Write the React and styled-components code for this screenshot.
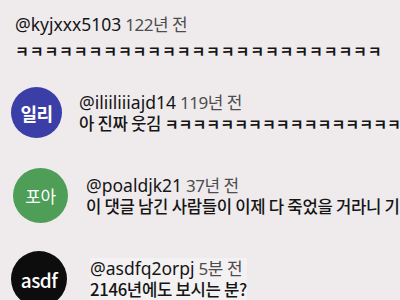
import React from "react";
import styled, { createGlobalStyle } from "styled-components";

const Global = createGlobalStyle`
  html, body { margin: 0; padding: 0; background: #efebed; }
  body { font-family: "Noto Sans", "Noto Sans CJK KR", sans-serif; color: #141414; }
`;

const Page = styled.div`
  width: 400px;
  height: 300px;
  overflow: hidden;
  background: #efebed;
  display: flex;
  flex-direction: column;
`;

const Row = styled.div`
  display: flex;
  align-items: center;
  gap: ${(p) => p.$gap}px;
  padding-left: ${(p) => p.$left}px;
  margin-top: ${(p) => p.$top}px;
  white-space: nowrap;
`;

const Avatar = styled.div`
  flex: none;
  width: ${(p) => p.$size}px;
  height: ${(p) => p.$size}px;
  border-radius: 50%;
  background: ${(p) => p.$bg};
  color: #fff;
  display: flex;
  align-items: center;
  justify-content: center;
  font-family: "Noto Sans CJK KR", sans-serif;
  font-size: ${(p) => p.$font || 17}px;
  font-weight: ${(p) => p.$weight || 500};
  letter-spacing: -0.5px;
`;

const Body = styled.div`
  display: flex;
  flex-direction: column;
  gap: ${(p) => p.$gap || 0}px;
  background: ${(p) => p.$bg || "transparent"};
`;

const Meta = styled.div`
  font-size: 17.5px;
  line-height: 21px;
  display: flex;
  align-items: baseline;
  gap: 4px;
`;

const Handle = styled.span`
  color: #151515;
`;

const Time = styled.span`
  color: #4e4c4e;
  font-family: "Noto Sans", "Noto Sans CJK KR", sans-serif;
  font-weight: 400;
  font-size: 17px;
  letter-spacing: -0.5px;
`;

const Text = styled.div`
  font-family: "Noto Sans CJK KR", sans-serif;
  font-size: 16.7px;
  line-height: 21px;
  font-weight: 500;
  color: #151515;
  letter-spacing: -0.3px;
`;

const Laugh = styled.span`
  letter-spacing: ${(p) => p.$spacing}px;
  font-weight: 700;
  font-size: 15px;
`;

const comments = [
  {
    handle: "@kyjxxx5103",
    time: "122년 전",
    text: "",
    laugh: "ㅋ".repeat(25),
    spacing: 0.9,
    top: 14,
    left: 15,
    gap: 0,
    bodyGap: 5,
  },
  {
    handle: "@iliiliiiajd14",
    time: "119년 전",
    text: "아 진짜 웃김 ",
    laugh: "ㅋ".repeat(17),
    spacing: 0.1,
    avatar: { label: "일리", bg: "#3c3ea8", size: 51, weight: 700, font: 18 },
    top: 26,
    left: 11,
    gap: 17,
  },
  {
    handle: "@poaldjk21",
    time: "37년 전",
    text: "이 댓글 남긴 사람들이 이제 다 죽었을 거라니 기분",
    avatar: { label: "포아", bg: "#4e9e58", size: 55, weight: 400, font: 17 },
    top: 30,
    left: 13,
    gap: 18,
  },
  {
    handle: "@asdfq2orpj",
    time: "5분 전",
    text: "2146년에도 보시는 분?",
    avatar: { label: "asdf", bg: "#0e0d0e", size: 56, weight: 500, font: 19 },
    top: 28,
    left: 11,
    gap: 23,
    bodyBg: "#f3f1f2",
  },
];

export default function App() {
  return (
    <Page>
      <Global />
      {comments.map((c) => (
        <Row key={c.handle} $top={c.top} $left={c.left} $gap={c.gap}>
          {c.avatar && (
            <Avatar
              $size={c.avatar.size}
              $bg={c.avatar.bg}
              $weight={c.avatar.weight}
              $font={c.avatar.font}
            >
              {c.avatar.label}
            </Avatar>
          )}
          <Body $gap={c.bodyGap} $bg={c.bodyBg}>
            <Meta>
              <Handle>{c.handle}</Handle>
              <Time>{c.time}</Time>
            </Meta>
            <Text>
              {c.text}
              {c.laugh && <Laugh $spacing={c.spacing}>{c.laugh}</Laugh>}
            </Text>
          </Body>
        </Row>
      ))}
    </Page>
  );
}
